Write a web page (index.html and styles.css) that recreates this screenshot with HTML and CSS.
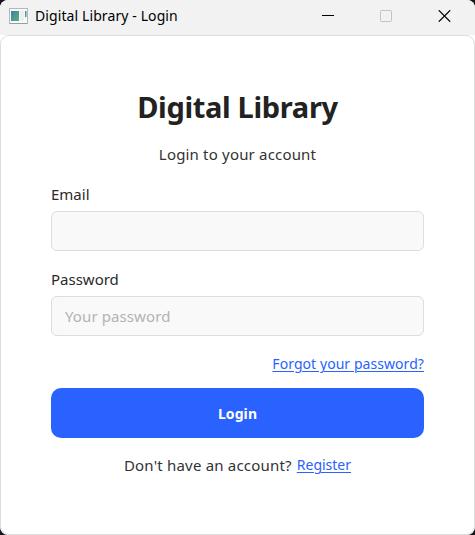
FILE: index.html
```html
<!DOCTYPE html>
<html lang="en">
<head>
<meta charset="utf-8">
<title>Digital Library - Login</title>
<link rel="stylesheet" href="styles.css">
</head>
<body>
<div class="window">
  <header class="titlebar">
    <svg class="app-icon" width="19" height="16" viewBox="0 0 19 16">
      <defs><linearGradient id="pane" x1="0" y1="0" x2="1" y2="1"><stop offset="0" stop-color="#427fa6"/><stop offset="1" stop-color="#5bb274"/></linearGradient></defs>
      <rect x=".5" y=".5" width="18" height="15" fill="#f8f9fa" stroke="#b4b8be"/>
      <path d="M1 15.5h17" stroke="#979ba2"/>
      <rect x="2" y="3" width="8" height="10" fill="url(#pane)"/>
      <rect x="11" y="3" width="4" height="10" fill="#eceff1"/>
      <rect x="16" y="3" width="1.5" height="6" fill="url(#pane)"/>
    </svg>
    <span class="caption">Digital Library - Login</span>
    <div class="controls">
      <svg width="12" height="12" viewBox="0 0 12 12"><path d="M0 5.5h12" stroke="#000"/></svg>
      <svg width="12" height="12" viewBox="0 0 12 12"><rect x=".5" y=".5" width="11" height="11" rx=".8" fill="none" stroke="#c3c3c3"/></svg>
      <svg width="13" height="12" viewBox="0 0 13 12"><path d="M.8.3l11.4 11.4M12.2.3L.8 11.7" stroke="#000" stroke-width="1.2"/></svg>
    </div>
  </header>
  <main class="card">
    <h1 class="title">Digital Library</h1>
    <p class="subtitle">Login to your account</p>
    <form class="form">
      <label class="label" for="email">Email</label>
      <input class="input" id="email" type="email">
      <label class="label label-password" for="password">Password</label>
      <input class="input" id="password" type="password" placeholder="Your password">
      <a class="link forgot" href="#">Forgot your password?</a>
      <button class="submit" type="button">Login</button>
    </form>
    <p class="signup"><span class="question">Don't have an account?</span><a class="link register" href="#">Register</a></p>
  </main>
</div>
</body>
</html>
```

FILE: styles.css
```css
* { box-sizing: border-box; }

body {
  margin: 0;
  background: #15151c;
  font-family: "Noto Sans", "Open Sans", sans-serif;
  font-size: 15px;
  color: #333;
}

.window {
  display: flex;
  flex-direction: column;
  width: 475px;
  height: 535px;
  background: #fff;
  border-radius: 8px;
  overflow: hidden;
}

.titlebar {
  display: flex;
  align-items: center;
  height: 35px;
  padding: 0 24px 3px 9px;
  background: #f2f2f2;
}

.app-icon { flex: none; }

.caption {
  margin-left: 7px;
  font-size: 14px;
  line-height: 20px;
  letter-spacing: 0.1px;
  color: #000;
}

.controls {
  display: flex;
  gap: 46px;
  margin-left: auto;
}

.card {
  flex: 1;
  padding: 50px 50px 0;
  background: #fff;
  border: 1px solid #dedede;
  border-radius: 9px;
}

.title {
  margin: 0;
  font-size: 29px;
  line-height: 42px;
  letter-spacing: -0.33px;
  text-align: center;
  color: #222;
}

.subtitle {
  margin: 16px 0 0;
  line-height: 20px;
  letter-spacing: 0.18px;
  text-align: center;
}

.form {
  display: flex;
  flex-direction: column;
  margin-top: 20px;
}

.label {
  line-height: 20px;
  color: #2a2a2a;
}

.label-password { margin-top: 18px; }

.input {
  width: 373px;
  height: 40px;
  margin-top: 7px;
  padding: 0 13px;
  font: inherit;
  letter-spacing: 0.1px;
  background: #f9f9f9;
  border: 1px solid #ddd;
  border-radius: 6px;
}

.input::placeholder { color: #b3b3b3; }

.link {
  color: #2962ff;
  text-decoration: underline;
  text-decoration-thickness: 1px;
  text-underline-offset: 2px;
}

.forgot {
  align-self: flex-end;
  margin-top: 18px;
  font-size: 14px;
  line-height: 20px;
  letter-spacing: 0.06px;
}

.submit {
  height: 50px;
  margin-top: 14px;
  padding: 0;
  font: bold 14px "Noto Sans", sans-serif;
  letter-spacing: 0.1px;
  color: #fff;
  background: #2962ff;
  border: 0;
  border-radius: 10px;
}

.signup {
  display: flex;
  justify-content: center;
  gap: 5px;
  margin: 17px 0 0;
  line-height: 20px;
}

.question { letter-spacing: 0.2px; }

.register { font-size: 14px; }
```
